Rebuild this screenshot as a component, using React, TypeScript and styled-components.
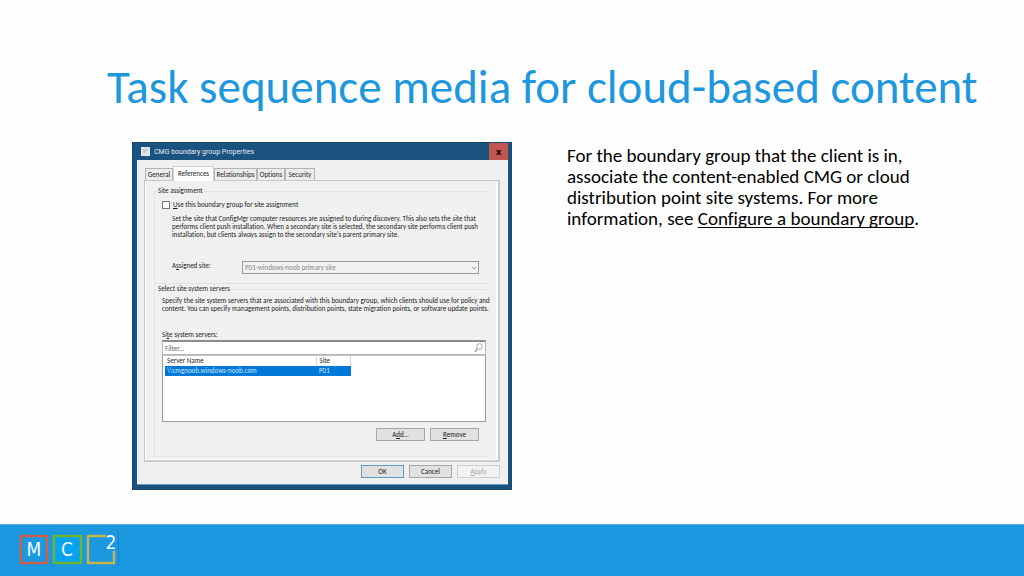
import React from "react";
import styled, { createGlobalStyle } from "styled-components";

const Global = createGlobalStyle`
  * { box-sizing: border-box; }
  body { margin: 0; background: #fefefe; }
`;

const Slide = styled.div`
  min-height: 100vh;
  display: flex;
  flex-direction: column;
  font-family: Carlito, Lato, "Open Sans", sans-serif;
  font-variant-ligatures: none;
  color: #000;
`;

const Heading = styled.h1`
  margin: 0;
  padding: 60px 40px 0 107px;
  font-size: 47px;
  line-height: 54px;
  font-weight: 400;
  color: #1f97dc;
  white-space: nowrap;
`;

const Columns = styled.main`
  flex: 1;
  display: grid;
  grid-template-columns: 380px minmax(0, 1fr);
  column-gap: 55px;
  align-items: start;
  padding: 28px 80px 32px 132px;
`;

const Note = styled.p`
  margin: 3px 0 0;
  font-size: 19px;
  line-height: 21px;
  white-space: nowrap;
`;

const NoteLink = styled.a`
  color: inherit;
  text-decoration: underline;
  text-decoration-skip-ink: none;
  text-underline-offset: 2px;
`;

const Dialog = styled.section`
  background: #1a5280;
  border: 1px solid #174667;
  padding: 0 3px 4px 4px;
  font-size: 7px;
  line-height: 8px;
  color: #1c1c1c;
`;

const TitleBar = styled.header`
  display: flex;
  align-items: center;
  height: 17px;
  padding-left: 4px;
  gap: 4px;
  color: #e4edf4;
  font-family: Roboto, sans-serif;
`;

const CloseButton = styled.button`
  margin-left: auto;
  width: 19px;
  height: 17px;
  padding: 0;
  border: 0;
  background: #c2554f;
  color: #000;
  font: 700 9px/16px "Open Sans", sans-serif;
`;

const Body = styled.div`
  background: #f0f0f0;
  padding: 6px 8px 6px 7px;
  border-bottom: 1px solid #5f9cc4;
`;

const Tabs = styled.div`
  display: flex;
  align-items: flex-end;
  padding-left: 1px;
  height: 14px;
`;

const Tab = styled.button<{ $active?: boolean; $w: number }>`
  width: ${(p) => p.$w}px;
  height: ${(p) => (p.$active ? 15 : 12)}px;
  margin-bottom: ${(p) => (p.$active ? -1 : 0)}px;
  padding: 0;
  border: 1px solid ${(p) => (p.$active ? "#d0d0d0" : "#b4b4b4")};
  border-bottom: 0;
  background: ${(p) => (p.$active ? "#fff" : "#ececec")};
  color: inherit;
  font: inherit;
  white-space: nowrap;
`;

const Panel = styled.div`
  border: 1px solid #c4c7cc;
  border-right: 2px solid #c9ccd0;
  border-bottom: 2px solid #c9ccd0;
  box-shadow: inset 1px 0 #fff, inset -2px -1px #fff;
  padding: 5px 10px 3px 9px;
`;

const Group = styled.fieldset<{ $bottom: number }>`
  margin: 0;
  min-width: 0;
  border: 1px solid #e2e2e2;
  border-right-color: transparent;
  padding: 0 8px ${(p) => p.$bottom}px 7px;
  & > legend { margin-left: -4px; padding: 0 1px 0 0; line-height: 10px; }
`;

const CheckLabel = styled.label`
  display: flex;
  align-items: center;
  height: 10px;
  margin-top: 4px;
  gap: 3px;
`;

const Check = styled.input`
  appearance: none;
  width: 8px;
  height: 8px;
  margin: 0;
  border: 1px solid #777;
  background: #fff;
`;

const Text = styled.p<{ $indent?: boolean; $top: number }>`
  margin: ${(p) => p.$top}px 0 0 ${(p) => (p.$indent ? 10 : 0)}px;
  white-space: nowrap;
`;

const SiteRow = styled.div`
  display: grid;
  grid-template-columns: 70px 1fr;
  padding-left: 10px;
  margin-top: 22px;
  & > label { line-height: 10px; }
`;

const SelectWrap = styled.div`
  display: grid;
  & > * { grid-area: 1 / 1; }
  & > svg { justify-self: end; align-self: center; margin-right: 2px; pointer-events: none; }
`;

const Select = styled.select`
  appearance: none;
  height: 13px;
  padding: 0 2px;
  border: 1px solid #999;
  border-radius: 0;
  background: #f2f2f2;
  color: #858585;
  opacity: 1;
  font: inherit;
`;

const FieldLabel = styled.label`
  display: block;
  margin-top: 17px;
  line-height: 10px;
`;

const FilterBar = styled.div`
  display: flex;
  align-items: center;
  height: 15px;
  width: 324px;
  padding-right: 2px;
  background: #fff;
  border: 1px solid #b5b5b5;
  border-top: 2px solid #8c8c8c;
`;

const FilterInput = styled.input`
  flex: 1;
  min-width: 0;
  height: 12px;
  padding: 0 2px;
  border: 0;
  background: transparent;
  font: inherit;
  outline: 0;
  &::placeholder { color: #666; opacity: 1; }
`;

const ListBox = styled.div`
  width: 324px;
  height: 67px;
  padding-left: 2px;
  background: #fff;
  border: 1px solid #9a9a9a;
  border-top-color: #c4c4c4;
`;

const Table = styled.table`
  width: 186px;
  table-layout: fixed;
  border-collapse: collapse;
  text-align: left;
  th, td { height: 10px; padding: 0 0 0 2px; font-weight: 400; white-space: nowrap; }
  th { border-right: 1px solid #ddd; }
  th:first-child { width: 151px; }
  td { background: #0078d7; color: #cfe8ff; }
  td + td, th + th { padding-left: 3px; }
`;

const Actions = styled.div<{ $top: number }>`
  display: flex;
  justify-content: flex-end;
  gap: 5px;
  margin-top: ${(p) => p.$top}px;
`;

const PushButton = styled.button<{ $w: number; $primary?: boolean }>`
  width: ${(p) => p.$w}px;
  height: 13px;
  padding: 0;
  border: 1px solid ${(p) => (p.$primary ? "#5a9cc4" : "#a6a6a6")};
  background: #e1e1e1;
  color: #1c1c1c;
  font: inherit;
  &:disabled { border-color: #cfcfcf; background: #f2f2f2; color: #a8a8a8; }
`;

const Footer = styled.footer`
  height: 52px;
  padding: 6px 19px;
  background: #1b98e0;
  border-top: 1px solid #52b2e8;
`;

const Logo = () => (
  <svg width="102" height="38" viewBox="0 -3 102 38" role="img" aria-label="MC2" fill="none" strokeWidth="2.400">
    <rect x="2" y="2" width="26" height="27" stroke="#cf6246" />
    <rect x="35" y="2" width="27" height="27" stroke="#6db52c" fill="#06a3f0" />
    <path d="M87 2H69V29H95V17" stroke="#c9b44c" />
    <path d="M99.500 -3V32" stroke="#1b80bd" strokeWidth="1" />
    <g fill="#f2faff" fontFamily="'DejaVu Sans Condensed', 'DejaVu Sans', sans-serif" fontSize="19" textAnchor="middle">
      <text x="15" y="22">M</text>
      <text x="48" y="22">C</text>
      <text x="92" y="15">2</text>
    </g>
  </svg>
);

export default function App() {
  return (
    <Slide>
      <Global />
      <Heading>Task sequence media for cloud-based content</Heading>
      <Columns>
        <Dialog aria-label="CMG boundary group Properties">
          <TitleBar>
            <svg width="9" height="9" viewBox="0 0 9 9" aria-hidden="true">
              <rect width="9" height="9" fill="#dfe5e8" />
              <path d="M2 3h5M2 5h3" stroke="#a9b8c0" />
            </svg>
            <span>CMG boundary group Properties</span>
            <CloseButton aria-label="Close">x</CloseButton>
          </TitleBar>
          <Body>
            <Tabs role="tablist">
              <Tab role="tab" $w={28}>General</Tab>
              <Tab role="tab" aria-selected $active $w={41}>References</Tab>
              <Tab role="tab" $w={43}>Relationships</Tab>
              <Tab role="tab" $w={28}>Options</Tab>
              <Tab role="tab" $w={30}>Security</Tab>
            </Tabs>
            <Panel>
              <Group $bottom={9}>
                <legend>Site assignment</legend>
                <CheckLabel>
                  <Check type="checkbox" />
                  <span><u>U</u>se this boundary group for site assignment</span>
                </CheckLabel>
                <Text $indent $top={5}>
                  Set the site that ConfigMgr computer resources are assigned to during discovery. This also sets the site that<br />
                  performs client push installation. When a secondary site is selected, the secondary site performs client push<br />
                  installation, but clients always assign to the secondary site's parent primary site.
                </Text>
                <SiteRow>
                  <label htmlFor="site">A<u>s</u>signed site:</label>
                  <SelectWrap>
                    <Select id="site" disabled>
                      <option>P01-windows-noob primary site</option>
                    </Select>
                    <svg width="6" height="4" viewBox="0 0 6 4" fill="none" stroke="#999" aria-hidden="true">
                      <path d="M1 1l2 2 2-2" />
                    </svg>
                  </SelectWrap>
                </SiteRow>
              </Group>
              <Group $bottom={15}>
                <legend>Select site system servers</legend>
                <Text $top={3}>
                  Specify the site system servers that are associated with this boundary group, which clients should use for policy and<br />
                  content. You can specify management points, distribution points, state migration points, or software update points.
                </Text>
                <FieldLabel htmlFor="filter">Si<u>t</u>e system servers:</FieldLabel>
                <FilterBar>
                  <FilterInput id="filter" placeholder="Filter..." />
                  <svg width="9" height="10" viewBox="0 0 9 10" fill="none" stroke="#a8a8a8" aria-hidden="true">
                    <circle cx="5.500" cy="3.500" r="2.800" />
                    <path d="M3.500 5.500L1 9" strokeWidth="1.500" />
                  </svg>
                </FilterBar>
                <ListBox>
                  <Table>
                    <thead><tr><th>Server Name</th><th>Site</th></tr></thead>
                    <tbody><tr><td>\\cmgnoob.windows-noob.com</td><td>P01</td></tr></tbody>
                  </Table>
                </ListBox>
                <Actions $top={6}>
                  <PushButton $w={49}>A<u>d</u>d...</PushButton>
                  <PushButton $w={49}><u>R</u>emove</PushButton>
                </Actions>
              </Group>
            </Panel>
            <Actions $top={3}>
              <PushButton $w={43} $primary>OK</PushButton>
              <PushButton $w={43}>Cancel</PushButton>
              <PushButton $w={43} disabled><u>A</u>pply</PushButton>
            </Actions>
          </Body>
        </Dialog>
        <Note>
          For the boundary group that the client is in,<br />
          associate the content-enabled CMG or cloud<br />
          distribution point site systems. For more<br />
          information, see <NoteLink href="#boundary-group">Configure a boundary group</NoteLink>.
        </Note>
      </Columns>
      <Footer><Logo /></Footer>
    </Slide>
  );
}
